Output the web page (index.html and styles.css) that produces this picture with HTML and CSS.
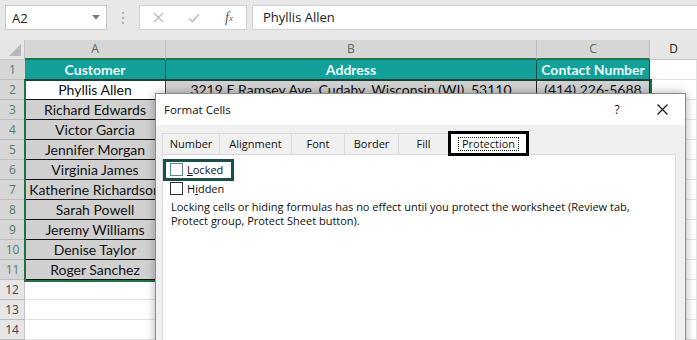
FILE: index.html
```html
<!DOCTYPE html>
<html>
<head>
<meta charset="utf-8">
<link rel="stylesheet" href="styles.css">
</head>
<body>
<div class="fbar">
  <div class="namebox"><span>A2</span><svg width="8" height="5" viewBox="0 0 8 5"><path d="M0 0H8L4 4.5Z" fill="#7a7a7a"/></svg></div>
  <div class="grip"><i></i><i></i><i></i></div>
  <div class="fxbox">
    <span class="ico"><svg width="11" height="11" viewBox="0 0 11 11"><path d="M1 1L10 10M10 1L1 10" stroke="#b9b9b9" stroke-width="1.3" fill="none"/></svg></span>
    <span class="ico"><svg width="12" height="10" viewBox="0 0 12 10"><path d="M1 5.5L4.3 8.8L11 1.2" stroke="#b9b9b9" stroke-width="1.4" fill="none"/></svg></span>
    <span class="ico fx">f<sub>x</sub></span>
  </div>
  <div class="finput">Phyllis Allen</div>
</div>

<div class="sheet">
  <div class="corner"><svg width="14" height="14" viewBox="0 0 14 14"><path d="M13 1V13H1Z" fill="#b7b7b7"/></svg></div>
  <div class="ch">A</div><div class="ch">B</div><div class="ch">C</div><div class="ch d">D</div>

  <div class="rh">1</div><div class="c h">Customer</div><div class="c h">Address</div><div class="c h">Contact Number</div><div class="c e"></div>
  <div class="rh">2</div><div class="c w">Phyllis Allen</div><div class="c g">3219 E Ramsey Ave, Cudahy, Wisconsin (WI), 53110</div><div class="c g">(414) 226-5688</div><div class="c e"></div>
  <div class="rh">3</div><div class="c g">Richard Edwards</div><div class="c g"></div><div class="c g"></div><div class="c e"></div>
  <div class="rh">4</div><div class="c g">Victor Garcia</div><div class="c g"></div><div class="c g"></div><div class="c e"></div>
  <div class="rh">5</div><div class="c g">Jennifer Morgan</div><div class="c g"></div><div class="c g"></div><div class="c e"></div>
  <div class="rh">6</div><div class="c g">Virginia James</div><div class="c g"></div><div class="c g"></div><div class="c e"></div>
  <div class="rh">7</div><div class="c g">Katherine Richardson</div><div class="c g"></div><div class="c g"></div><div class="c e"></div>
  <div class="rh">8</div><div class="c g">Sarah Powell</div><div class="c g"></div><div class="c g"></div><div class="c e"></div>
  <div class="rh">9</div><div class="c g">Jeremy Williams</div><div class="c g"></div><div class="c g"></div><div class="c e"></div>
  <div class="rh">10</div><div class="c g">Denise Taylor</div><div class="c g"></div><div class="c g"></div><div class="c e"></div>
  <div class="rh">11</div><div class="c g">Roger Sanchez</div><div class="c g"></div><div class="c g"></div><div class="c e"></div>
  <div class="rh n">12</div><div class="c e"></div><div class="c e"></div><div class="c e"></div><div class="c e"></div>
  <div class="rh n">13</div><div class="c e"></div><div class="c e"></div><div class="c e"></div><div class="c e"></div>
  <div class="rh n">14</div><div class="c e"></div><div class="c e"></div><div class="c e"></div><div class="c e"></div>
</div>

<div class="selection"></div>

<div class="dialog">
  <div class="dtitle">
    <span class="dname">Format Cells</span>
    <span class="help">?</span>
    <span class="close"><svg width="11" height="11" viewBox="0 0 11 11"><path d="M0.5 0.5L10.5 10.5M10.5 0.5L0.5 10.5" stroke="#111" stroke-width="1.1" fill="none"/></svg></span>
  </div>
  <div class="dbody">
    <div class="tabs">
      <div class="tab t1">Number</div>
      <div class="tab t2">Alignment</div>
      <div class="tab t3">Font</div>
      <div class="tab t4">Border</div>
      <div class="tab t5">Fill</div>
      <div class="tab sel"><span class="focus">Protection</span></div>
    </div>
    <div class="panel">
      <div class="focusbox"><span class="cb cb-l"></span><span class="lbl"><u>L</u>ocked</span></div>
      <div class="opt"><span class="cb"></span><span class="lbl">H<u>i</u>dden</span></div>
      <p class="note">Locking cells or hiding formulas has no effect until you protect the worksheet (Review tab,<br>Protect group, Protect Sheet button).</p>
    </div>
  </div>
</div>
</body>
</html>
```

FILE: styles.css
```css
* { box-sizing: border-box; margin: 0; padding: 0; }
html, body { width: 697px; height: 340px; overflow: hidden; background: #fff; }
body { position: relative; font-family: "Open Sans", "Noto Sans", sans-serif; color: #111; }

/* formula bar */
.fbar { display: flex; align-items: flex-start; height: 40px; padding: 5px 0 0 5px; background: #e8e8e8; }
.namebox { width: 102px; height: 25px; background: #fff; border: 1px solid #c6c6c6; display: flex; align-items: center; justify-content: space-between; padding: 0 6px; font-size: 13px; color: #222; }
.grip { display: flex; flex-direction: column; gap: 3px; margin: 7px 0 0 15px; width: 2px; }
.grip i { display: block; width: 2px; height: 2px; background: #b3b3b3; }
.fxbox { margin-left: 15px; width: 108px; height: 25px; background: #fff; border: 1px solid #d2d2d2; display: grid; grid-template-columns: 36px 36px 34px; align-items: center; }
.ico { display: flex; justify-content: center; align-items: center; }
.fx { font-family: "Liberation Serif", serif; font-style: italic; font-size: 14px; color: #555; }
.fx sub { font-size: 9px; vertical-align: -1px; }
.finput { margin-left: 5px; flex: 1; height: 25px; background: #fff; border: 1px solid #d2d2d2; border-right: none; padding-left: 10px; font-size: 13px; line-height: 23px; color: #222; }

/* sheet grid */
.sheet { display: grid; grid-template-columns: 25px 141px 371px 113px 47px; grid-auto-rows: 20px; font-family: Lato, "Liberation Sans", sans-serif; font-size: 14px; }
.corner { background: #e6e6e6; border-right: 1px solid #c4c4c4; border-bottom: 1px solid #c4c4c4; display: flex; align-items: flex-end; justify-content: flex-end; padding: 0 2px 2px 0; }
.ch { background: #d6d6d6; border-right: 1px solid #bdbdbd; border-bottom: 2px solid #217346; text-align: center; font-family: "Open Sans", sans-serif; font-size: 12px; line-height: 18px; color: #4b6e5c; }
.ch.d { background: #e6e6e6; border-bottom: 1px solid #c8c8c8; border-right: none; color: #222; }
.rh { background: #d6d6d6; border-bottom: 1px solid #bdbdbd; text-align: center; font-family: "Open Sans", sans-serif; font-size: 12px; line-height: 19px; color: #56796a; }
.rh.n { background: #e6e6e6; color: #444; border-right: 1px solid #c4c4c4; }
.c { border-right: 1px solid #e2e2e2; border-bottom: 1px solid #e2e2e2; text-align: center; white-space: nowrap; overflow: hidden; line-height: 19px; color: #111; }
.c.h { background: #12a09a; color: #e9fbf8; font-weight: bold; border-right: 1px solid #1d4d45; border-bottom: 1px solid #1d2d2a; }
.c.g { background: #d0d0d0; border-right: 1px solid #222; border-bottom: 1px solid #111; }
.c.w { background: #fff; border-right: 1px solid #444; border-bottom: 1px solid #111; }

/* selection overlay */
.selection { position: absolute; left: 24px; top: 79px; width: 628px; height: 203px; border: 2px solid #217346; border-top-color: #1d3f33; pointer-events: none; }

/* dialog */
.dialog { position: absolute; left: 155px; top: 93px; width: 531px; height: 262px; background: #f0f0f0; border: 1px solid #8c8c8c; box-shadow: 0 0 9px rgba(0,0,0,.32); font-family: "Open Sans", "Noto Sans", sans-serif; color: #111; }
.dtitle { height: 31px; background: #fff; display: flex; align-items: center; padding-left: 8px; }
.dname { flex: 1; font-size: 11.5px; }
.help { width: 30px; text-align: center; font-size: 12px; margin-right: 8px; }
.close { width: 45px; display: flex; justify-content: center; }
.dbody { padding: 8px 9px 0 6px; }
.tabs { display: flex; height: 21px; }
.tab { height: 21px; border: 1px solid #d9d9d9; border-bottom: none; border-right: none; background: #f0f0f0; font-size: 11px; line-height: 20px; text-align: center; }
.t1 { width: 57px; }
.t2 { width: 72px; }
.t3 { width: 53px; }
.t4 { width: 54px; }
.t5 { width: 50px; }
.tab.sel { width: 81px; height: 25px; margin-top: -2px; border: 3px solid #000; background: #fff; position: relative; z-index: 1; display: flex; align-items: center; justify-content: center; line-height: 12px; }
.focus { border: 1px dotted #222; padding: 0 3px; }
.panel { background: #fff; border: 1px solid #d9d9d9; height: 200px; padding: 4px 0 0 0; }
.focusbox { display: inline-flex; align-items: center; border: 3px solid #1b4d4a; padding: 1px 8px 2px 4px; font-size: 11px; }
.opt { display: flex; align-items: center; margin: 1px 0 0 7px; font-size: 11px; height: 13px; }
.cb { display: inline-block; width: 13px; height: 13px; border: 1px solid #333; background: #fff; margin-right: 4px; }
.cb-l { border-color: #5c8785; }
.lbl { line-height: 13px; }
.note { margin: 5px 0 0 8px; font-size: 11px; line-height: 14px; }
```
